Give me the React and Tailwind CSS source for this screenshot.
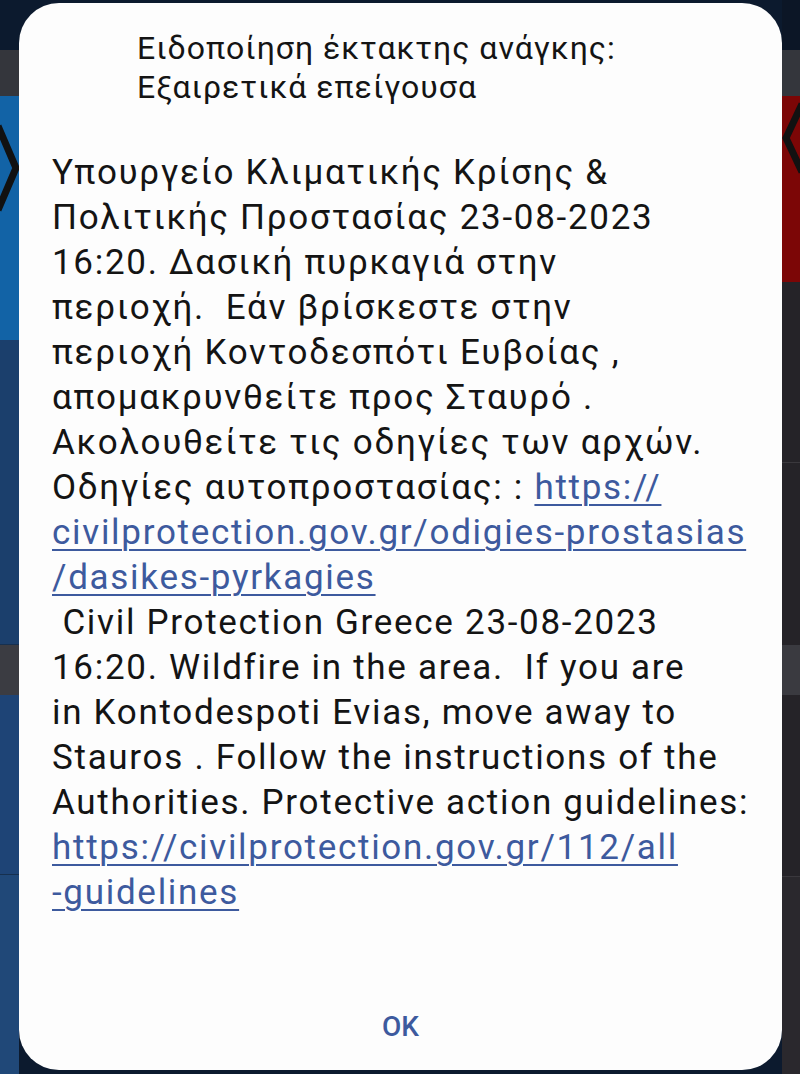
const greek = [
  "Υπουργείο Κλιματικής Κρίσης &",
  "Πολιτικής Προστασίας 23-08-2023",
  "16:20. Δασική πυρκαγιά στην",
  "περιοχή.  Εάν βρίσκεστε στην",
  "περιοχή Κοντοδεσπότι Ευβοίας ,",
  "απομακρυνθείτε προς Σταυρό .",
  "Ακολουθείτε τις οδηγίες των αρχών.",
];

const english = [
  " Civil Protection Greece 23-08-2023",
  "16:20. Wildfire in the area.  If you are",
  "in Kontodespoti Evias, move away to",
  "Stauros . Follow the instructions of the",
  "Authorities. Protective action guidelines:",
];

function Link({ children }) {
  return <span className="text-[#3d5a9e] underline decoration-[2px] underline-offset-[5px]">{children}</span>;
}

function LeftEdge() {
  return (
    <div className="w-[19px] shrink-0 flex flex-col">
      <div className="h-[50px] bg-[#0c1a2e]" />
      <div className="h-[46px] bg-[#34363c]" />
      <div className="h-[244px] bg-[#1263a6]">
        <svg width="19" height="244" viewBox="0 0 19 244">
          <path d="M-2 30 L16 72 L-2 114" fill="none" stroke="#111" strokeWidth="7" />
        </svg>
      </div>
      <div className="h-[305px] bg-[#1b3f6c] border-b border-[#16304f]" />
      <div className="h-[50px] bg-[#3b3c42]" />
      <div className="h-[180px] bg-[#1e4476] border-b border-[#16304f]" />
      <div className="flex-1 bg-[#204878]" />
    </div>
  );
}

function RightEdge() {
  return (
    <div className="w-[18px] shrink-0 flex flex-col">
      <div className="h-[50px] bg-[#0c1626]" />
      <div className="h-[46px] bg-[#34363c]" />
      <div className="h-[186px] bg-[#7c0606]">
        <svg width="18" height="186" viewBox="0 0 18 186">
          <path d="M20 8 L4 42 L20 76" fill="none" stroke="#111" strokeWidth="7" />
        </svg>
      </div>
      <div className="h-[181px] bg-[#252328] border-b border-[#3a383d]" />
      <div className="h-[182px] bg-[#252328]" />
      <div className="h-[50px] bg-[#3a3a40]" />
      <div className="h-[182px] bg-[#252328] border-b border-[#3a383d]" />
      <div className="flex-1 bg-[#2a282d]" />
    </div>
  );
}

export default function App() {
  return (
    <div className="w-[800px] h-[1074px] flex bg-[#0c1a2e] overflow-hidden font-['Roboto',sans-serif]">
      <LeftEdge />
      <div className="flex-1 flex flex-col pt-[3px] pb-[4px] bg-[#0c1a2e]">
        <div className="flex-1 bg-[#fdfdfd] rounded-[40px] flex flex-col">
          <div className="pl-[118px] pt-[26px] text-[32px] leading-[39px] tracking-[1px] text-[#141414]">
            <div className="whitespace-nowrap">Ειδοποίηση έκτακτης ανάγκης:</div>
            <div className="whitespace-nowrap">Εξαιρετικά επείγουσα</div>
          </div>
          <div className="pl-[33px] pt-[43px] text-[35px] leading-[45px] tracking-[1.7px] text-[#141414] whitespace-pre">
            {greek.map((l, i) => (
              <div key={i}>{l}</div>
            ))}
            <div>
              Οδηγίες αυτοπροστασίας: : <Link>https://</Link>
            </div>
            <div>
              <Link>civilprotection.gov.gr/odigies-prostasias</Link>
            </div>
            <div>
              <Link>/dasikes-pyrkagies</Link>
            </div>
            {english.map((l, i) => (
              <div key={i}>{l}</div>
            ))}
            <div>
              <Link>https://civilprotection.gov.gr/112/all</Link>
            </div>
            <div>
              <Link>-guidelines</Link>
            </div>
          </div>
          <div className="flex-1" />
          <div className="flex justify-center pb-[26px]">
            <button className="text-[28px] leading-[34px] font-medium text-[#3d5a9e] px-4">OK</button>
          </div>
        </div>
      </div>
      <RightEdge />
    </div>
  );
}
